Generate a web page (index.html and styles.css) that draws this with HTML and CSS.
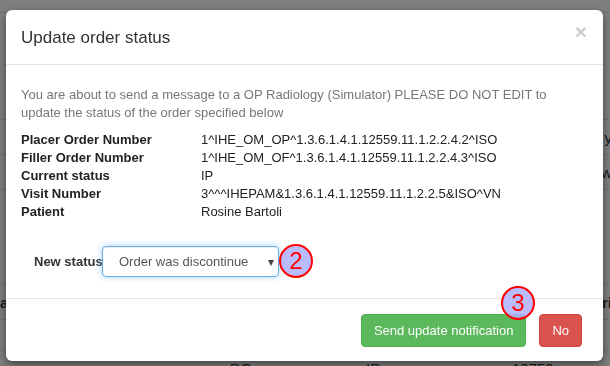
FILE: index.html
```html
<html>
<head>
    <link rel="stylesheet" href="styles.css">
</head>
<body>
    <div class="page">
        <table class="bg-table">
            <tr class="row-head"><td class="c1"></td><td class="c2"></td><td class="c3"></td><td class="c4"></td></tr>
            <tr><td></td><td></td><td></td><td class="edge">y</td></tr>
            <tr><td></td><td></td><td></td><td class="edge">w</td></tr>
            <tr class="row-tall"><td></td><td></td><td></td><td></td></tr>
            <tr><td class="bold">a</td><td></td><td></td><td class="edge bold">ri</td></tr>
            <tr class="row-gap"><td></td><td></td><td></td><td></td></tr>
            <tr><td></td><td class="dc">DC</td><td>IP</td><td>10750</td></tr>
        </table>
    </div>
    <div class="backdrop"></div>

    <div class="modal">
        <div class="modal-header">
            <h4 class="modal-title">Update order status</h4>
            <span class="close">&times;</span>
        </div>
        <div class="modal-body">
            <p class="intro">You are about to send a message to a OP Radiology (Simulator) PLEASE DO NOT EDIT to
              update the status of the order specified below</p>
            <dl class="details">
                <dt>Placer Order Number</dt><dd>1^IHE_OM_OP^1.3.6.1.4.1.12559.11.1.2.2.4.2^ISO</dd>
                <dt>Filler Order Number</dt><dd>1^IHE_OM_OF^1.3.6.1.4.1.12559.11.1.2.2.4.3^ISO</dd>
                <dt>Current status</dt><dd>IP</dd>
                <dt>Visit Number</dt><dd>3^^^IHEPAM&amp;1.3.6.1.4.1.12559.11.1.2.2.5&amp;ISO^VN</dd>
                <dt>Patient</dt><dd>Rosine Bartoli</dd>
            </dl>
            <div class="status-row">
                <label class="status-label">New status</label>
                <div class="select">
                    <span>Order was discontinue</span>
                    <span class="caret">&#9662;</span>
                </div>
            </div>
        </div>
        <div class="modal-footer">
            <button class="btn btn-success">Send update notification</button>
            <button class="btn btn-danger">No</button>
        </div>

        <!-- tutorial markers -->
        <div class="marker marker-2">2</div>
        <div class="marker marker-3">3</div>
    </div>
</body>
</html>
```

FILE: styles.css
```css
        body {
            margin: 0;
            background-color: #ffffff;
            font-family: 'Liberation Sans', Arial, sans-serif;
            font-size: 13px;
            color: #333;
            overflow: hidden;
        }
        .page {
            padding-top: 12px;
        }
        .bg-table {
            width: 612px;
            border-collapse: collapse;
            table-layout: fixed;
        }
        .bg-table td {
            border-top: 1px solid #e3e3e3;
            height: 35px;
            padding: 0;
            font-size: 15px;
            color: #333;
            vertical-align: middle;
            white-space: nowrap;
        }
        .bg-table .c1 { width: 226px; }
        .bg-table .c2 { width: 140px; }
        .bg-table .c3 { width: 146px; }
        .bg-table .row-head td {
            height: 107px;
        }
        .bg-table .row-tall td {
            height: 95px;
        }
        .bg-table .row-gap td {
            height: 31px;
        }
        .bg-table td.edge {
            text-align: right;
        }
        .bg-table td.bold {
            font-weight: bold;
        }
        .bg-table td.dc {
            padding-left: 4px;
        }
        .backdrop {
            position: fixed;
            top: 0;
            left: 0;
            right: 0;
            bottom: 0;
            background-color: rgba(0, 0, 0, 0.5);
        }
        .modal {
            position: fixed;
            top: 10px;
            left: 6px;
            width: 597px;
            background-color: #ffffff;
            border-radius: 6px;
            box-shadow: 0 3px 9px rgba(0, 0, 0, 0.5);
        }
        .modal-header {
            display: flex;
            justify-content: space-between;
            align-items: flex-start;
            padding: 15px;
            border-bottom: 1px solid #e5e5e5;
        }
        .modal-title {
            margin: 0;
            padding-top: 1px;
            font-size: 17px;
            font-weight: normal;
            line-height: 23px;
            color: #333;
        }
        .close {
            font-size: 21px;
            font-weight: bold;
            line-height: 16px;
            color: #000;
            opacity: 0.2;
            margin-right: 1px;
            margin-top: -1px;
        }
        .modal-body {
            padding: 21px 15px 14px 15px;
        }
        .intro {
            margin: 0 0 9px;
            color: #777;
            line-height: 18px;
            width: 540px;
        }
        .details {
            display: grid;
            grid-template-columns: 180px 1fr;
            margin: 0;
            line-height: 18px;
            color: #222;
        }
        .details dt {
            font-weight: bold;
        }
        .details dd {
            margin: 0;
        }
        .status-row {
            display: flex;
            align-items: center;
            margin-top: 25px;
            padding-left: 13px;
            margin-bottom: 7px;
        }
        .status-label {
            font-weight: bold;
            white-space: nowrap;
            width: 68px;
        }
        .select {
            display: flex;
            justify-content: space-between;
            align-items: center;
            box-sizing: border-box;
            width: 177px;
            height: 31px;
            padding: 0 4px 0 16px;
            border: 1px solid #66afe9;
            border-radius: 4px;
            box-shadow: inset 0 1px 1px rgba(0, 0, 0, 0.075), 0 0 6px rgba(102, 175, 233, 0.6);
            font-size: 13px;
            color: #555;
        }
        .caret {
            font-size: 12px;
            color: #444;
        }
        .modal-footer {
            display: flex;
            justify-content: flex-end;
            gap: 13px;
            padding: 15px 21px 14px 15px;
            border-top: 1px solid #e5e5e5;
        }
        .btn {
            height: 33px;
            padding: 0 12px;
            border-radius: 4px;
            font-family: 'Liberation Sans', Arial, sans-serif;
            font-size: 13px;
            color: #ffffff;
            border: 1px solid transparent;
        }
        .btn-success {
            background-color: #5cb85c;
            border-color: #4cae4c;
        }
        .btn-danger {
            background-color: #d9534f;
            border-color: #d43f3a;
        }
        .marker {
            position: absolute;
            width: 30px;
            height: 30px;
            border: 2.5px solid #ff0000;
            border-radius: 50%;
            background-color: rgba(175, 175, 255, 0.85);
            color: #ff0000;
            font-family: 'Liberation Sans', sans-serif;
            font-size: 24px;
            line-height: 30px;
            text-align: center;
        }
        .marker-2 {
            left: 273px;
            top: 234px;
        }
        .marker-3 {
            left: 495px;
            top: 276px;
        }
```
